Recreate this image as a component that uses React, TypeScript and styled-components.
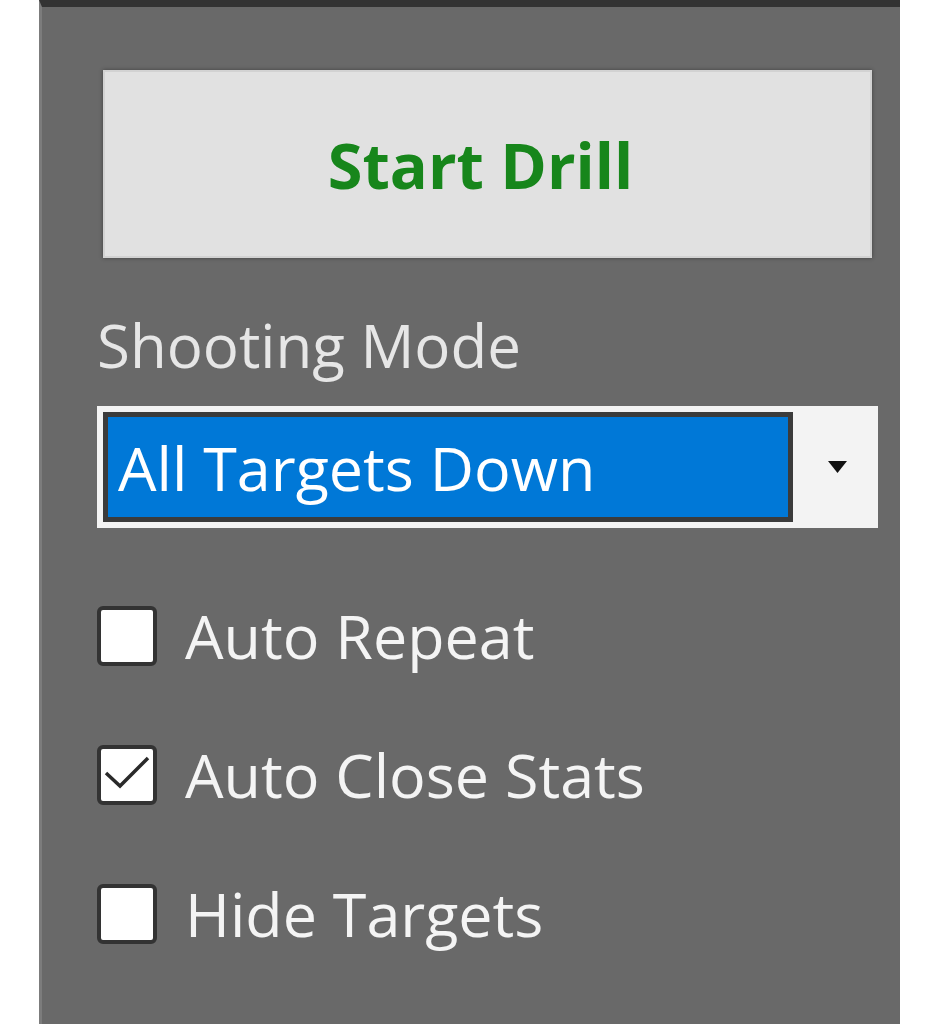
import React from "react";
import styled, { createGlobalStyle } from "styled-components";

const GlobalStyle = createGlobalStyle`
  html, body {
    margin: 0;
    padding: 0;
    background: #ffffff;
  }
  body {
    font-family: "Open Sans", "Noto Sans", sans-serif;
  }
`;

const Page = styled.div`
  display: flex;
  width: 938px;
  height: 1024px;
  overflow: hidden;
`;

const Panel = styled.div`
  margin-left: 39px;
  width: 861px;
  height: 1024px;
  box-sizing: border-box;
  background: #696969;
  border-top: 7px solid #333333;
  border-left: 3px solid #7c7c7c;
  padding: 63px 22px 0 55px;
  display: flex;
  flex-direction: column;
`;

const DrillButton = styled.button`
  margin-left: 6px;
  width: 769px;
  height: 188px;
  box-sizing: border-box;
  background: #e1e1e1;
  border: 2px solid #d2d2d2;
  box-shadow: 0 0 4px rgba(0, 0, 0, 0.4);
  font-family: "Open Sans", "Noto Sans", sans-serif;
  font-weight: 700;
  font-size: 63px;
  color: #17861b;
  display: flex;
  align-items: center;
  justify-content: center;
  padding: 0 14px 0 0;
  cursor: pointer;
`;

const FieldLabel = styled.div`
  margin-top: 57px;
  font-size: 60px;
  line-height: 60px;
  color: #e6e6e6;
`;

const Combo = styled.div`
  margin-top: 31px;
  width: 781px;
  height: 122px;
  box-sizing: border-box;
  background: #f3f3f3;
  padding: 6px 0 6px 6px;
  display: flex;
`;

const ComboField = styled.div`
  width: 690px;
  box-sizing: border-box;
  background: #0078d7;
  border: 5px solid #3b3b3b;
  display: flex;
  align-items: center;
  padding-left: 10px;
  font-size: 61px;
  line-height: 61px;
  color: #ffffff;
`;

const ComboArrow = styled.div`
  flex: 1;
  display: flex;
  align-items: center;
  justify-content: center;
  padding-left: 4px;
`;

const CheckList = styled.div`
  margin-top: 78px;
  display: flex;
  flex-direction: column;
  gap: 79px;
`;

const CheckRow = styled.label`
  display: flex;
  align-items: center;
  gap: 28px;
  height: 60px;
`;

const Box = styled.span`
  width: 60px;
  height: 60px;
  box-sizing: border-box;
  background: #ffffff;
  border: 4px solid #333333;
  border-radius: 6px;
  display: flex;
  align-items: center;
  justify-content: center;
`;

const CheckText = styled.span`
  font-size: 61px;
  line-height: 60px;
  color: #f4f4f4;
`;

const options = [
  { label: "Auto Repeat", checked: false },
  { label: "Auto Close Stats", checked: true },
  { label: "Hide Targets", checked: false },
];

export default function App() {
  return (
    <Page>
      <GlobalStyle />
      <Panel>
        <DrillButton>Start Drill</DrillButton>
        <FieldLabel>Shooting Mode</FieldLabel>
        <Combo>
          <ComboField>All Targets Down</ComboField>
          <ComboArrow>
            <svg width="19" height="12" viewBox="0 0 19 12">
              <polygon points="0,0 19,0 9.5,12" fill="#111" />
            </svg>
          </ComboArrow>
        </Combo>
        <CheckList>
          {options.map((o) => (
            <CheckRow key={o.label}>
              <Box>
                {o.checked && (
                  <svg width="52" height="52" viewBox="0 0 52 52">
                    <polyline
                      points="5,24 19,37 47,9"
                      fill="none"
                      stroke="#2a2a2a"
                      strokeWidth="3.5"
                    />
                  </svg>
                )}
              </Box>
              <CheckText>{o.label}</CheckText>
            </CheckRow>
          ))}
        </CheckList>
      </Panel>
    </Page>
  );
}
